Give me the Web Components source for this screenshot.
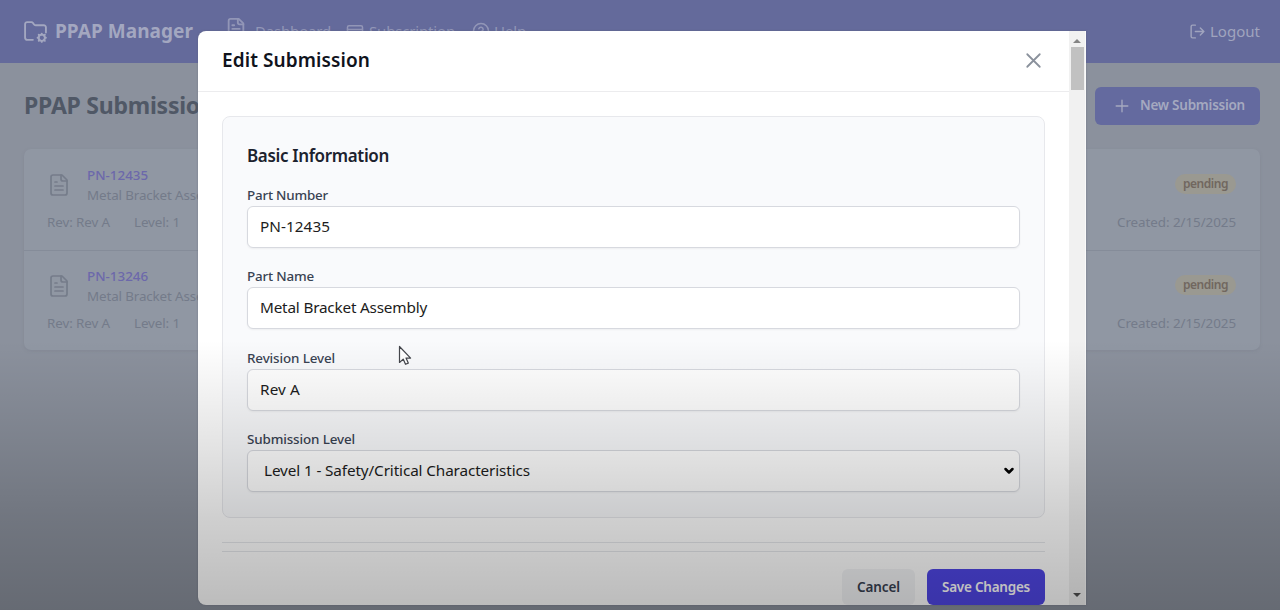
<!DOCTYPE html>
<html lang="en">
<head>
<meta charset="utf-8">
<title>PPAP Manager</title>
<style>
html,body{margin:0;height:100%;overflow:hidden}
body{font-family:"Noto Sans","Open Sans",sans-serif;background:#8b919d}
</style>
</head>
<body>
<ppap-app></ppap-app>
<script>
const define = (name, html, ready) => {
  const t = document.createElement('template');
  t.innerHTML = html;
  customElements.define(name, class extends HTMLElement {
    connectedCallback() {
      if (this.shadowRoot) return;
      this.attachShadow({mode: 'open'}).append(t.content.cloneNode(true));
      if (ready) ready.call(this, this.shadowRoot);
    }
  });
};

/* A line of text tracked to a given measure. */
define('ui-text', `<style>:host{display:inline-block;white-space:nowrap;line-height:1.4}span{display:inline-block}</style><span><slot></slot></span>`, function (root) {
  const w = +this.getAttribute('measure');
  if (!w) return;
  this.style.width = w + 'px';
  const span = root.querySelector('span');
  span.style.letterSpacing = (w - span.getBoundingClientRect().width) / this.textContent.length + 'px';
});

const icons = {
  folder: '<path d="M9.5 20H4a2 2 0 0 1-2-2V5a2 2 0 0 1 2-2h3.9a2 2 0 0 1 1.7.9l.8 1.2a2 2 0 0 0 1.7.9H20a2 2 0 0 1 2 2v5"/><circle cx="18" cy="18" r="3"/><path d="M18 14v1M18 21v1M22 18h-1M15 18h-1M21 15l-.9.9M16 20l-.9.9M21 21l-.9-.9M16 16l-.9-.9"/>',
  file: '<path d="M15 2H6a2 2 0 0 0-2 2v16a2 2 0 0 0 2 2h12a2 2 0 0 0 2-2V7Z"/><path d="M14 2v4a2 2 0 0 0 2 2h4M10 9H8M16 13H8M16 17H8"/>',
  card: '<rect x="2" y="5" width="20" height="14" rx="2"/><path d="M2 10h20"/>',
  help: '<circle cx="12" cy="12" r="10"/><path d="M9.1 9a3 3 0 0 1 5.8 1c0 2-3 3-3 3M12 17h.01"/>',
  logout: '<path d="M9 21H5a2 2 0 0 1-2-2V5a2 2 0 0 1 2-2h4M16 17l5-5-5-5M21 12H9"/>',
  plus: '<path d="M5 12h14M12 5v14"/>',
  close: '<path d="M18 6 6 18M6 6l12 12"/>',
  chevron: '<path d="m5 8 7 7 7-7"/>'
};
define('ui-icon', `<style>:host{display:block;flex:none}svg{display:block;width:100%;height:100%;fill:none;stroke:currentColor;stroke-linecap:round;stroke-linejoin:round}</style><svg viewBox="0 0 24 24"></svg>`, function (root) {
  const size = this.getAttribute('size');
  this.style.width = this.style.height = size + 'px';
  const svg = root.querySelector('svg');
  svg.setAttribute('stroke-width', this.getAttribute('weight') || 2);
  svg.innerHTML = icons[this.getAttribute('name')];
});

define('app-header', `<style>
:host{display:flex;height:62.5px;box-sizing:border-box;align-items:center;padding:0 20px 0 23px;background:#646a9b;color:#a6aac1;font-size:15px}
.brand{display:flex;align-items:center;gap:7px;font-size:19px;font-weight:700;color:#a3a7c0}
nav{display:flex;margin-left:34px;color:#9296b7}
nav div{display:flex;align-items:center}
.out{display:flex;align-items:center;gap:4px;margin-left:auto;color:#a0a4be}
</style>
<div class="brand"><ui-icon name="folder" size="25" weight="1.8"></ui-icon><ui-text measure="138">PPAP Manager</ui-text></div>
<nav>
<div style="gap:8px;margin-right:15px"><ui-icon name="file" size="22" weight="2" style="position:relative;top:-3px;margin-left:-2px"></ui-icon><ui-text measure="76">Dashboard</ui-text></div>
<div style="gap:5px;margin-right:17px"><ui-icon name="card" size="18"></ui-icon><ui-text measure="86">Subscription</ui-text></div>
<div style="gap:4px"><ui-icon name="help" size="18"></ui-icon><ui-text measure="32">Help</ui-text></div>
</nav>
<div class="out"><ui-icon name="logout" size="17"></ui-icon><ui-text measure="50">Logout</ui-text></div>`);

define('submission-row', `<style>
:host{display:block;box-sizing:border-box;height:100.5px;padding:15px 24px 0 23px;color:#747b8a;font-size:13.4px}
.top,.id,.meta{display:flex;align-items:center}
.top{justify-content:space-between;height:41px}
.names{display:grid;margin-left:16px;grid-template-rows:20px 20px}
.names ui-text{line-height:20px}
.pn{color:#6c68ab;font-weight:500}
.tag{height:20px;line-height:20px;padding:0 8px;border-radius:10px;background:#9a9991;color:#71675f;font-size:12px;font-weight:600;margin-top:-2px}
.tag ui-text{line-height:20px;display:block}
.meta{margin-top:7px;height:20px}
.meta ui-text:last-child{margin-left:auto}
</style>
<div class="top"><div class="id"><ui-icon name="file" size="24" weight="1.7" style="color:#757c8a"></ui-icon><div class="names"><ui-text class="pn" measure="61"><slot></slot></ui-text><ui-text measure="147">Metal Bracket Assembly</ui-text></div></div><div class="tag"><ui-text measure="45">pending</ui-text></div></div>
<div class="meta"><ui-text measure="63">Rev: Rev A</ui-text><ui-text measure="46" style="margin-left:24px">Level: 1</ui-text><ui-text measure="119">Created: 2/15/2025</ui-text></div>`, function (root) {
  const pn = root.querySelector('.pn');
  pn.textContent = this.getAttribute('part');
});

define('submission-page', `<style>
:host{display:block;padding:24px 20px 0 24px}
.bar{display:flex;align-items:center;justify-content:space-between;height:38px}
h1{margin:0;font-size:23px;font-weight:700;line-height:1;color:#505866}
.new{display:flex;align-items:center;box-sizing:border-box;width:165px;height:38px;padding-left:17px;gap:8px;border-radius:6px;background:#646a9f;color:#a5a9c0;font-size:13.5px;font-weight:600}
.list{margin-top:24.5px;border-radius:7px;background:#9097a3;box-shadow:0 1px 3px #777e8b66}
.list submission-row+submission-row{border-top:1px solid #858c99}
</style>
<div class="bar"><h1><ui-text measure="202">PPAP Submissions</ui-text></h1><div class="new"><ui-icon name="plus" size="20" weight="1.6"></ui-icon><ui-text measure="105">New Submission</ui-text></div></div>
<div class="list"><submission-row part="PN-12435"></submission-row><submission-row part="PN-13246"></submission-row></div>`);

define('form-field', `<style>
:host{display:block;margin-bottom:17.5px;color:#394353;font-size:13.4px;font-weight:500}
.label{height:22px;line-height:22px}
.label ui-text{line-height:22px}
.box{display:flex;align-items:center;justify-content:space-between;box-sizing:border-box;height:42px;padding:0 4px 0 12px;border:1px solid #d7d9df;border-radius:6px;background:#fff;box-shadow:0 1px 2px #0000000d;color:#1c1c20;font-size:15.3px;font-weight:400}
:host([select]) .box{padding-left:16px}
</style><div class="label"></div><div class="box"></div>`, function (root) {
  const line = (name) => {
    const t = document.createElement('ui-text');
    t.textContent = this.getAttribute(name);
    t.setAttribute('measure', this.getAttribute(name + '-measure'));
    return t;
  };
  root.querySelector('.label').append(line('label'));
  const box = root.querySelector('.box');
  box.append(line('value'));
  if (this.hasAttribute('select')) box.insertAdjacentHTML('beforeend', '<ui-icon name="chevron" size="12" weight="5" style="color:#000"></ui-icon>');
});

define('scroll-bar', `<style>
:host{display:flex;flex-direction:column;justify-content:space-between;box-sizing:border-box;width:17px;flex:none;background:#f1f1f1;border-right:1px solid #fafafa;align-items:center}
.thumb{width:13px;height:43px;background:#c1c1c1;margin-top:4px}
svg{display:block;width:8px;height:5px}
.up{margin-top:7px}.down{margin-bottom:7px}
</style><div><svg class="up" viewBox="0 0 8 5" style="margin-left:2.5px"><path d="M0 5 4 1l4 4z" fill="#858585"/></svg><div class="thumb"></div></div><svg class="down" viewBox="0 0 8 5"><path d="M0 0h8L4 4z" fill="#505050"/></svg>`);

define('edit-dialog', `<style>
:host{display:flex;position:absolute;left:198px;top:30.5px;width:888px;height:574px;border-radius:8px 0 0 8px;overflow:hidden;background:#fff;box-shadow:0 0 2px #565c7080}
.main{flex:1;min-width:0}
header{display:flex;align-items:center;justify-content:space-between;box-sizing:border-box;height:61px;padding:0 26px 0 24px;border-bottom:1px solid #ececee}
h2{margin:0;font-size:19px;font-weight:600;line-height:1;color:#10131c}
.body{padding:24px 24px 0}
.panel{box-sizing:border-box;height:402.5px;padding:28px 24px 0;border:1px solid #e7e8ec;border-radius:8px;background:#f9fafc}
h3{margin:0 0 17px;font-size:17px;font-weight:600;line-height:22px;height:22px;color:#1c222e}
h3 ui-text{line-height:22px}
.rules{height:8px;margin-top:24px;border-top:1px solid #e5e7eb;border-bottom:1px solid #e5e7eb}
footer{display:flex;justify-content:flex-end;gap:12px;margin-top:17px;font-size:13.5px;font-weight:600}
footer div{display:flex;align-items:center;justify-content:center;height:36px;border-radius:6px}
.cancel{width:73px;background:#f3f4f6;color:#374151}
.save{width:118px;background:#4f46e5;color:#fff}
</style>
<div class="main">
<header><h2><ui-text measure="148">Edit Submission</ui-text></h2><ui-icon name="close" size="25" weight="1.7" style="color:#8a919c;margin-right:-3px"></ui-icon></header>
<div class="body">
<div class="panel"><h3><ui-text measure="142">Basic Information</ui-text></h3>
<form-field label="Part Number" label-measure="81" value="PN-12435" value-measure="70"></form-field>
<form-field label="Part Name" label-measure="67" value="Metal Bracket Assembly" value-measure="167"></form-field>
<form-field label="Revision Level" label-measure="88" value="Rev A" value-measure="40"></form-field>
<form-field select label="Submission Level" label-measure="108" value="Level 1 - Safety/Critical Characteristics" value-measure="266"></form-field></div>
<div class="rules"></div>
<footer><div class="cancel"><ui-text measure="43">Cancel</ui-text></div><div class="save"><ui-text measure="88">Save Changes</ui-text></div></footer>
</div></div>
<scroll-bar></scroll-bar>`);

define('mouse-pointer', `<style>:host{display:block;position:absolute;left:398px;top:345px;width:14px;height:20px}svg{display:block}</style><svg width="14" height="21" viewBox="0 0 14 21"><path d="M1.5 1.5v16l3.7-3.4 2.3 5.2 2.8-1.2-2.3-5h4.6z" fill="#fff" stroke="#44464c" stroke-width="1.2" stroke-linejoin="round"/></svg>`);

define('ppap-app', `<style>
:host{display:block;position:relative;width:1280px;height:610px;overflow:hidden;background:#8b919d}
.shade{position:absolute;inset:340px 0 0 0;background:linear-gradient(#0000 0,#00000008 12%,#0000001c 40%,#00000030 66%,#00000044 100%);pointer-events:none}
</style>
<app-header></app-header><submission-page></submission-page><edit-dialog></edit-dialog><mouse-pointer></mouse-pointer><div class="shade"></div>`);
</script>
</body>
</html>
